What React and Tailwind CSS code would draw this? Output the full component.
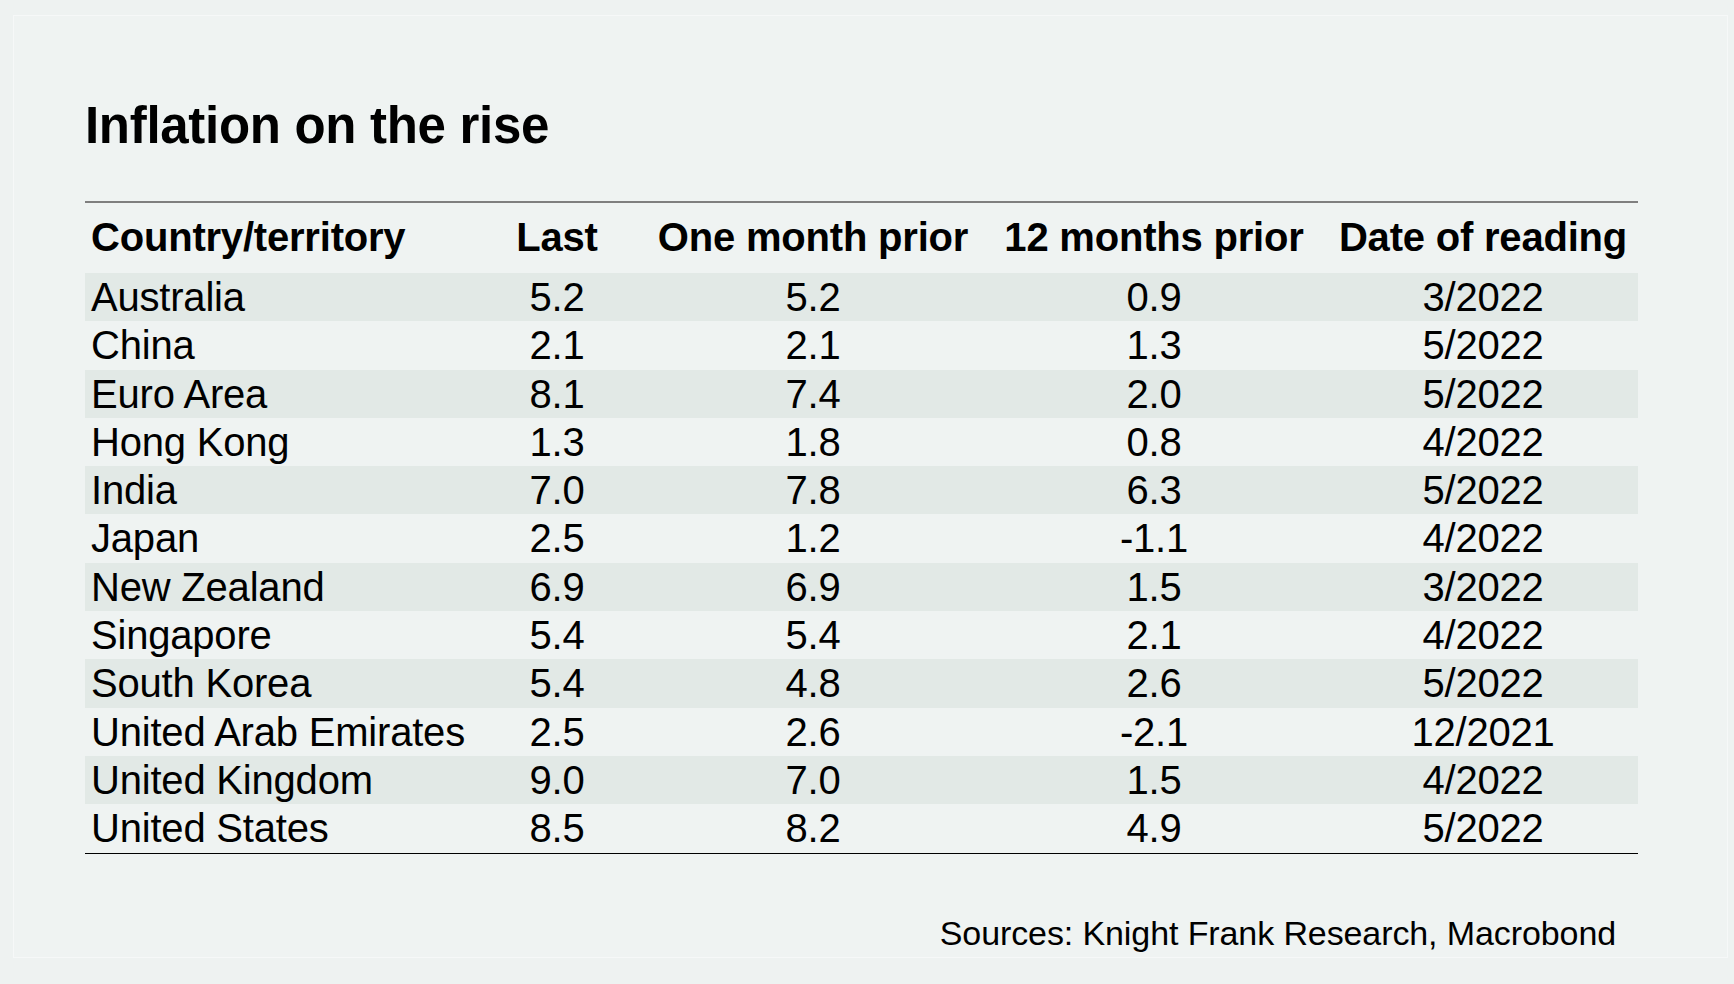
const ROWS = [
  ['Australia', '5.2', '5.2', '0.9', '3/2022'],
  ['China', '2.1', '2.1', '1.3', '5/2022'],
  ['Euro Area', '8.1', '7.4', '2.0', '5/2022'],
  ['Hong Kong', '1.3', '1.8', '0.8', '4/2022'],
  ['India', '7.0', '7.8', '6.3', '5/2022'],
  ['Japan', '2.5', '1.2', '-1.1', '4/2022'],
  ['New Zealand', '6.9', '6.9', '1.5', '3/2022'],
  ['Singapore', '5.4', '5.4', '2.1', '4/2022'],
  ['South Korea', '5.4', '4.8', '2.6', '5/2022'],
  ['United Arab Emirates', '2.5', '2.6', '-2.1', '12/2021'],
  ['United Kingdom', '9.0', '7.0', '1.5', '4/2022'],
  ['United States', '8.5', '8.2', '4.9', '5/2022'],
]

const HEADERS = ['Country/territory', 'Last', 'One month prior', '12 months prior', 'Date of reading']

const COLS = 'grid grid-cols-[383px_178px_334px_348px_310px]'

export default function App() {
  return (
    <div
      className="w-[1734px] h-[984px] bg-[#eef2f1] pt-[15px] pl-[13px] text-black"
      style={{ fontFamily: '"Liberation Sans", Arial, sans-serif' }}
    >
      <div className="w-[1715px] h-[943px] border border-[#f6f8f8] bg-[#eff3f2] pl-[71px] pt-[84px]">
        <h1 className="text-[51px] leading-none font-bold tracking-[-0.3px]">Inflation on the rise</h1>

        <div className="mt-[50px] w-[1553px]">
          <div className="h-[2px] bg-[#7f7f7f]" />
          <div className={`${COLS} h-[70px] pt-[14px] text-[40px] leading-[40px] font-bold tracking-[-0.2px]`}>
            {HEADERS.map((h, i) => (
              <div key={h} className={i === 0 ? 'pl-[6px] whitespace-nowrap' : 'text-center whitespace-nowrap'}>
                {h}
              </div>
            ))}
          </div>
          {ROWS.map((row, r) => (
            <div
              key={row[0]}
              className={`${COLS} h-[48.3px] text-[40px] leading-[48.3px] tracking-[-0.2px] ${r % 2 === 0 ? 'bg-[#e2e9e6]' : ''}`}
            >
              {row.map((cell, i) => (
                <div key={i} className={i === 0 ? 'pl-[6px] whitespace-nowrap' : 'text-center'}>
                  {cell}
                </div>
              ))}
            </div>
          ))}
          <div className="h-[1.5px] bg-black" />
          <div className="mt-[62px] pr-[22px] text-right text-[34px] leading-none tracking-[-0.1px]">
            Sources: Knight Frank Research, Macrobond
          </div>
        </div>
      </div>
    </div>
  )
}
